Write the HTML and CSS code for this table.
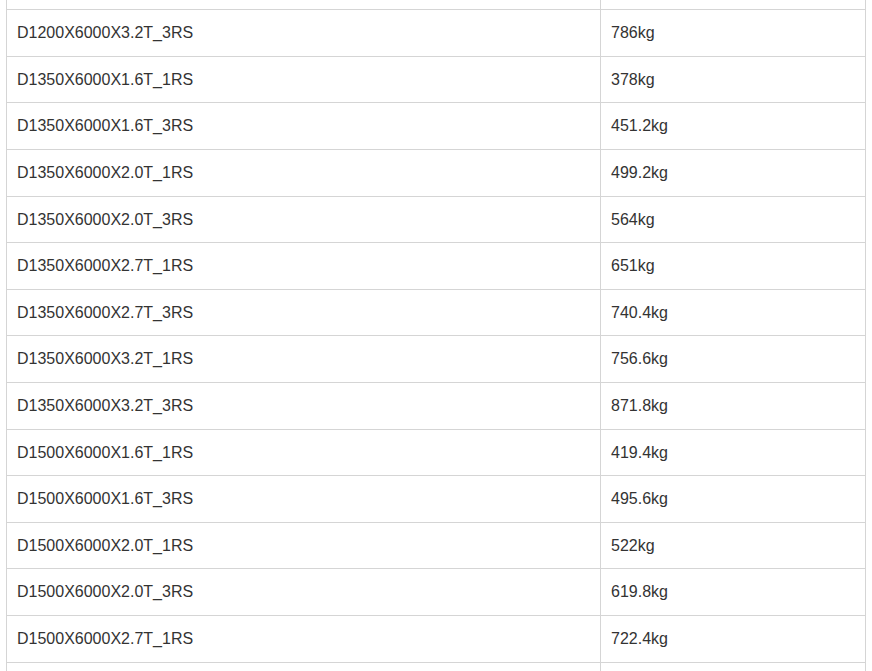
FILE: index.html
```html
<!DOCTYPE html>
<html>
<head>
<meta charset="utf-8">
<link rel="stylesheet" href="styles.css">
</head>
<body>
<div class="wrap">
<table class="spec">
<tbody>
<tr><td class="name">&nbsp;</td><td class="weight">&nbsp;</td></tr>
<tr><td class="name">D1200X6000X3.2T_3RS</td><td class="weight">786kg</td></tr>
<tr><td class="name">D1350X6000X1.6T_1RS</td><td class="weight">378kg</td></tr>
<tr><td class="name">D1350X6000X1.6T_3RS</td><td class="weight">451.2kg</td></tr>
<tr><td class="name">D1350X6000X2.0T_1RS</td><td class="weight">499.2kg</td></tr>
<tr><td class="name">D1350X6000X2.0T_3RS</td><td class="weight">564kg</td></tr>
<tr><td class="name">D1350X6000X2.7T_1RS</td><td class="weight">651kg</td></tr>
<tr><td class="name">D1350X6000X2.7T_3RS</td><td class="weight">740.4kg</td></tr>
<tr><td class="name">D1350X6000X3.2T_1RS</td><td class="weight">756.6kg</td></tr>
<tr><td class="name">D1350X6000X3.2T_3RS</td><td class="weight">871.8kg</td></tr>
<tr><td class="name">D1500X6000X1.6T_1RS</td><td class="weight">419.4kg</td></tr>
<tr><td class="name">D1500X6000X1.6T_3RS</td><td class="weight">495.6kg</td></tr>
<tr><td class="name">D1500X6000X2.0T_1RS</td><td class="weight">522kg</td></tr>
<tr><td class="name">D1500X6000X2.0T_3RS</td><td class="weight">619.8kg</td></tr>
<tr><td class="name">D1500X6000X2.7T_1RS</td><td class="weight">722.4kg</td></tr>
<tr><td class="name">&nbsp;</td><td class="weight">&nbsp;</td></tr>
</tbody>
</table>
</div>
</body>
</html>
```
FILE: styles.css
```css
html, body {
  margin: 0;
  padding: 0;
  background: #fff;
  overflow: hidden;
}
.wrap {
  padding: 0 6px;
  margin-top: -37.4px;
}
.spec {
  width: 860px;
  border-collapse: collapse;
  font-family: "Liberation Sans", Arial, sans-serif;
  font-size: 16px;
  line-height: 1.6;
  color: #333;
}
.spec td {
  border: 1px solid #d5d5d5;
  padding: 10px 10px;
  vertical-align: middle;
  text-align: left;
}
.spec .name {
  width: 573px;
}
.spec .weight {
  width: auto;
}
```
